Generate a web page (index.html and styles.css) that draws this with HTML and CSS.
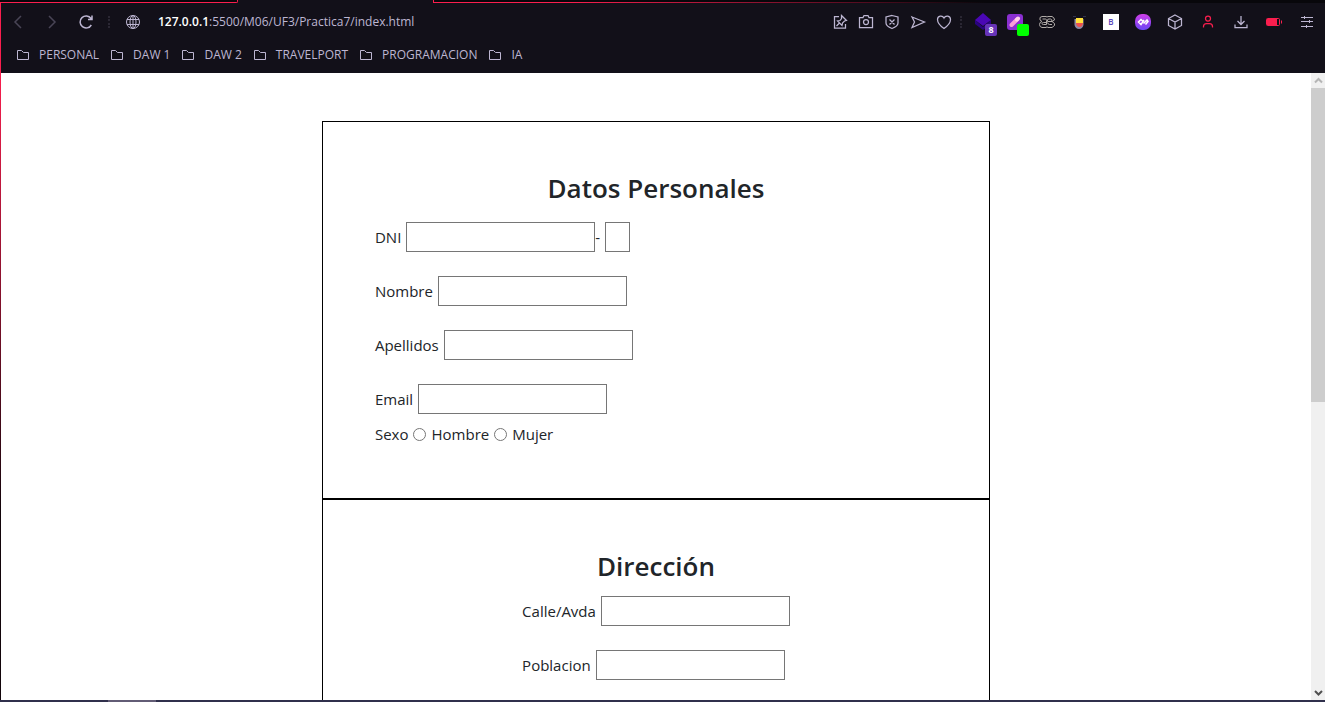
FILE: index.html
```html
<!DOCTYPE html>
<html lang="es">
<head>
<meta charset="utf-8">
<meta name="viewport" content="width=device-width, initial-scale=1">
<title>Practica7</title>
<link rel="stylesheet" href="styles.css">
</head>
<body>
<div class="browser">
  <div class="tabs"><span class="tab-left"></span><span class="tab-active"></span><span class="tab-right"></span></div>
  <header class="chrome">
    <div class="toolbar">
      <nav class="history" aria-label="Historial">
        <button class="tool dim" aria-label="Atrás"><svg viewBox="0 0 18 18"><path class="bold" d="M12 3 6 9l6 6"/></svg></button>
        <button class="tool dim" aria-label="Adelante"><svg viewBox="0 0 18 18"><path class="bold" d="m6 3 6 6-6 6"/></svg></button>
        <button class="tool" aria-label="Recargar"><svg viewBox="0 0 18 18"><path class="bold" d="M14.3 12A6 6 0 1 1 14 5.500M15 2.500V6.500H11"/></svg></button>
      </nav>
      <span class="dots"></span>
      <button class="tool site" aria-label="Información del sitio"><svg viewBox="0 0 18 18"><circle cx="9" cy="9" r="6.500"/><ellipse cx="9" cy="9" rx="3" ry="6.500"/><path d="M9 2.500v13M3 6.500h12M3 11.500h12"/></svg></button>
      <div class="address"><strong>127.0.0.1</strong>:5500/M06/UF3/Practica7/index.html</div>
      <div class="page-tools">
        <button class="tool" aria-label="Fijar"><svg viewBox="0 0 18 18"><path class="medium" d="M8 3.500H3.500V15H14.500V11M10.500 2.500l5 5-2 .5-2 2-.5 2.500L6.500 8 9 7.500l1.500-2zM8.500 10 5.500 13"/></svg></button>
        <button class="tool" aria-label="Captura"><svg viewBox="0 0 18 18"><path class="medium" d="M2.500 4.500H6l1-2h4l1 2h3.500v10h-13z"/><circle class="medium" cx="9" cy="9" r="2.500"/></svg></button>
        <button class="tool" aria-label="Bloqueador"><svg viewBox="0 0 18 18"><path class="medium" d="M9 2.500 15 4v6c0 2-2 4-6 5.500C5 14 3 12 3 10V4zM6.500 6.500l5 5M11.500 6.500l-5 5"/></svg></button>
        <button class="tool" aria-label="Enviar"><svg viewBox="0 0 18 18"><path class="medium" d="M3 4 15.500 9 3 14.500 5.500 9z"/></svg></button>
        <button class="tool" aria-label="Favorito"><svg viewBox="0 0 18 18"><path class="medium" d="M9 15.500C4 12 2.500 9.500 2.500 6.500 2.500 2.500 7.500 2 9 5c1.500-3 6.500-2.500 6.500 1.500 0 3-1.500 5.500-6.500 9z"/></svg></button>
      </div>
      <span class="dots"></span>
      <div class="extensions">
        <button class="ext" aria-label="Capas"><svg viewBox="0 0 20 20"><g stroke="none"><path fill="#2a0380" d="m2 8 8 7 8-7v4l-8 6-8-6z"/><path fill="#4a07b5" d="m10 1 8 7-8 6-8-6z"/></g></svg><span class="badge">8</span></button>
        <button class="ext" aria-label="Cuentagotas"><svg viewBox="0 0 20 20"><rect x="2" y="2" width="16" height="16" rx="3" fill="#8a2fd0" stroke="none"/><path stroke="#fa9bda" stroke-width="4" stroke-linecap="round" d="m6.500 13 5-5"/><path stroke="#ffd0e8" stroke-width="4" stroke-linecap="round" d="m12 7.500 1-1"/></svg><span class="badge green"></span></button>
        <button class="ext" aria-label="Símbolos"><svg viewBox="0 0 20 20"><path stroke="#b0aba8" d="M5 4.500h4q1 1 2 0h4q2.500 1 2.500 3.500L15 9.500l2.500 2v2L15 15.500h-4q-1-1.500-2 0H5Q2.500 15 2.500 12.500 2.500 10 5 9.500L3 8V5.500zM5.500 7h3q1 0 1 1.500v4M9.500 10.500h-3q-1.500 0-1.500 1t1.500 1h3M15 9.500h-4.500V8q0-1 1.500-1h1.500q1.500 0 1.500 2.500M10.500 10.500q.5 2 2 2H15"/></svg></button>
        <button class="ext" aria-label="Emoji"><svg viewBox="0 0 20 20"><g stroke="none"><path fill="#8d89a3" d="M5.500 7h9v6q-1 4-4.500 4t-4.500-4z"/><path fill="#ffe13b" d="M7 6h7v5H7z"/><path fill="#ed514d" d="M7 11h7q-.5 4-3.500 4T7 11z"/><path fill="#30304c" d="M4 4h3v1H4zm10 0h3v1h-3z"/></g></svg></button>
        <button class="ext" aria-label="B"><span class="b-tile">B</span></button>
        <button class="ext" aria-label="Infinito"><svg viewBox="0 0 20 20"><defs><linearGradient id="g" x2="0" y2="1"><stop stop-color="#cf3ee8"/><stop offset="1" stop-color="#6b45f5"/></linearGradient></defs><rect x="2" y="2" width="16" height="16" rx="7" fill="url(#g)" stroke="none"/><path stroke="#fff" stroke-width="1.500" d="m11 8-3 4.500L5.500 10 8 7.500l2 2M10.500 11.500 14 8l1 1.500-2.500 3"/></svg></button>
        <button class="ext" aria-label="Extensiones"><svg viewBox="0 0 20 20"><path class="medium" d="m10 3 6.500 3.500v7L10 17l-6.500-3.500v-7zM3.500 6.500 10 10l6.500-3.500M10 10v7"/></svg></button>
        <button class="ext wide red" aria-label="Perfil"><svg viewBox="0 0 20 20"><circle class="medium" cx="10" cy="6.500" r="2.500"/><path class="medium" d="M5.500 15.500v-1q0-3 3-3h3q3 0 3 3v1"/></svg></button>
        <button class="ext wide" aria-label="Descargas"><svg viewBox="0 0 20 20"><path class="medium" d="M10 4v8M6.500 9l3.500 3.500L13.500 9M4 12.500v3h12v-3"/></svg></button>
        <button class="ext wide red" aria-label="Batería"><svg viewBox="0 0 20 20"><rect x="2.500" y="6.500" width="13" height="7" rx="1"/><path stroke="none" fill="#fa1e4e" d="M3 7h10v6H3z"/><path d="M17.500 8.500v3"/></svg></button>
        <button class="ext wide" aria-label="Configuración"><svg viewBox="0 0 20 20"><path d="M4 5.500h12M4 9.500h12M4 14.500h12M7.500 4v3M12.500 8v3M9.500 13v3"/></svg></button>
      </div>
    </div>
    <nav class="bookmarks" aria-label="Marcadores">
      <a href="#"><svg viewBox="0 0 14 14"><path d="M1.500 2.500h4l2 2h5v7h-11z"/></svg>PERSONAL</a>
      <a href="#"><svg viewBox="0 0 14 14"><path d="M1.500 2.500h4l2 2h5v7h-11z"/></svg>DAW 1</a>
      <a href="#"><svg viewBox="0 0 14 14"><path d="M1.500 2.500h4l2 2h5v7h-11z"/></svg>DAW 2</a>
      <a href="#"><svg viewBox="0 0 14 14"><path d="M1.500 2.500h4l2 2h5v7h-11z"/></svg>TRAVELPORT</a>
      <a href="#"><svg viewBox="0 0 14 14"><path d="M1.500 2.500h4l2 2h5v7h-11z"/></svg>PROGRAMACION</a>
      <a href="#"><svg viewBox="0 0 14 14"><path d="M1.500 2.500h4l2 2h5v7h-11z"/></svg>IA</a>
    </nav>
  </header>
  <div class="viewport">
    <main class="page">
      <form class="form">
        <section class="panel">
          <h1>Datos Personales</h1>
          <div class="fields">
            <div class="row"><label for="dni">DNI</label><input class="text" id="dni" type="text"><span class="dash">-</span><input class="text letter" type="text" maxlength="1" aria-label="Letra del DNI"></div>
            <div class="row"><label for="nombre">Nombre</label><input class="text" id="nombre" type="text"></div>
            <div class="row"><label for="apellidos">Apellidos</label><input class="text" id="apellidos" type="text"></div>
            <div class="row"><label for="email">Email</label><input class="text" id="email" type="email"></div>
          </div>
          <div class="row gender"><span>Sexo</span><input class="radio" id="hombre" type="radio" name="sexo"><label for="hombre">Hombre</label><input class="radio" id="mujer" type="radio" name="sexo"><label for="mujer">Mujer</label></div>
        </section>
        <section class="panel centered">
          <h1>Dirección</h1>
          <div class="fields">
            <div class="row"><label for="calle">Calle/Avda</label><input class="text" id="calle" type="text"></div>
            <div class="row"><label for="poblacion">Poblacion</label><input class="text" id="poblacion" type="text"></div>
          </div>
        </section>
      </form>
    </main>
    <div class="scrollbar" aria-hidden="true">
      <svg class="up" viewBox="0 0 14 15"><path d="m4 9.500 3.500-3.500L11 9.500"/></svg>
      <span class="thumb"></span>
      <svg class="down" viewBox="0 0 14 15"><path d="M4 6l3.500 3.500L11 6"/></svg>
    </div>
  </div>
  <div class="taskbar"><span></span></div>
</div>
</body>
</html>
```
FILE: styles.css
```css
* { box-sizing: border-box; }
body {
  margin: 0;
  font-family: "Open Sans", "Noto Sans", sans-serif;
  font-size: 15px;
  line-height: 24px;
  color: #212529;
  background: #fff;
}
button { border: 0; padding: 0; background: none; font: inherit; color: inherit; }
svg { display: block; fill: none; stroke: currentColor; }

.browser { display: flex; flex-direction: column; height: 100vh; overflow: hidden; }

/* Lower edge of the tab strip */
.tabs { display: flex; flex: none; height: 3px; background: #08070b; }
.tab-left { width: 238px; border-bottom: 1px solid #fa1e4e; border-right: 1px solid #fa1e4e; border-bottom-right-radius: 2px; }
.tab-active { width: 195px; background: #121019; }
.tab-right { flex: 1; border-left: 1px solid #fa1e4e; background: linear-gradient(90deg, #fa1e4e 15%, #4a0b1d 50%, #08070b 62%) bottom / 100% 1px no-repeat; }

.chrome { flex: none; background: #121019; color: #bdb6d2; border-left: 1px solid #fa1e4e; }
.toolbar { display: flex; align-items: center; height: 38px; padding: 0 2px 0 8px; }
.history { display: flex; gap: 16px; }
.tool { width: 18px; height: 18px; }
.dim { color: #494556; }
.medium { stroke-width: 1.25; }
.bold { stroke-width: 1.5; }
.dots { width: 2px; height: 12px; border-left: 2px dotted #2a2733; margin: 0 5px 0 7px; }
.history + .dots { margin: 0 14px 0 13px; }
.address { flex: 1; margin-left: 16px; font-size: 12px; line-height: 18px; white-space: nowrap; }
.address strong { font-weight: 600; color: #fff; }
.page-tools { display: flex; gap: 8px; }
.extensions { display: flex; }
.ext { position: relative; display: flex; justify-content: center; align-items: center; width: 32px; height: 28px; }
.ext.wide { width: 33px; }
.ext svg { width: 20px; height: 20px; }
.red { color: #fa1e4e; }
.badge { position: absolute; right: 2px; bottom: 0; width: 12px; height: 12px; border-radius: 2px; background: #6734b8; color: #fff; font-size: 9px; font-weight: 700; line-height: 12px; text-align: center; }
.green { background: #0f0; }
.b-tile { width: 16px; height: 16px; background: #fff; color: #5844b8; font-size: 8px; font-weight: 600; line-height: 16px; }

.bookmarks { display: flex; gap: 11px; height: 32px; padding: 2px 15px; align-items: flex-start; }
.bookmarks a { display: flex; align-items: center; gap: 9px; font-size: 12px; line-height: 24px; color: inherit; text-decoration: none; }
.bookmarks svg { width: 14px; height: 14px; }

.viewport { flex: 1; min-height: 0; display: flex; background: linear-gradient(#fa1e4e, #12040a 70%) left / 1px 100% no-repeat; padding-left: 1px; }
.page { flex: 1; background: #fff; overflow: hidden; padding-top: 48px; }
.form { width: 51%; margin: 0 auto; }
.panel { border: 1px solid #000; padding: 52px; }
.panel h1 { margin: 0 0 20px; font-size: 26px; font-weight: 600; line-height: 28px; text-align: center; }
.fields { display: flex; flex-direction: column; gap: 24px; }
.row { display: flex; align-items: center; gap: 5px; }
.text { width: 189px; height: 30px; border: 1px solid #767676; padding: 1px 2px; background: #fff; font: inherit; color: inherit; }
.letter { width: 25px; }
.dash { margin-left: -5px; }
.gender { gap: 5px; margin-top: 8px; }
.radio { width: 13px; height: 13px; margin: 0; }
.centered .fields { width: fit-content; margin: 0 auto; }
.centered h1 { margin-bottom: 16px; }

.scrollbar { width: 14px; display: flex; flex-direction: column; background: #f0f0f0; }
.scrollbar svg { width: 14px; height: 15px; flex: none; stroke-width: 2; }
.up { color: #b5b5b5; }
.down { color: #505050; margin-top: auto; }
.thumb { height: 50%; background: #cdcdcd; }

.taskbar { flex: none; height: 2px; padding-left: 108px; background: #30304c; }
.taskbar span { display: block; width: 48px; height: 2px; background: #625c75; }
```
